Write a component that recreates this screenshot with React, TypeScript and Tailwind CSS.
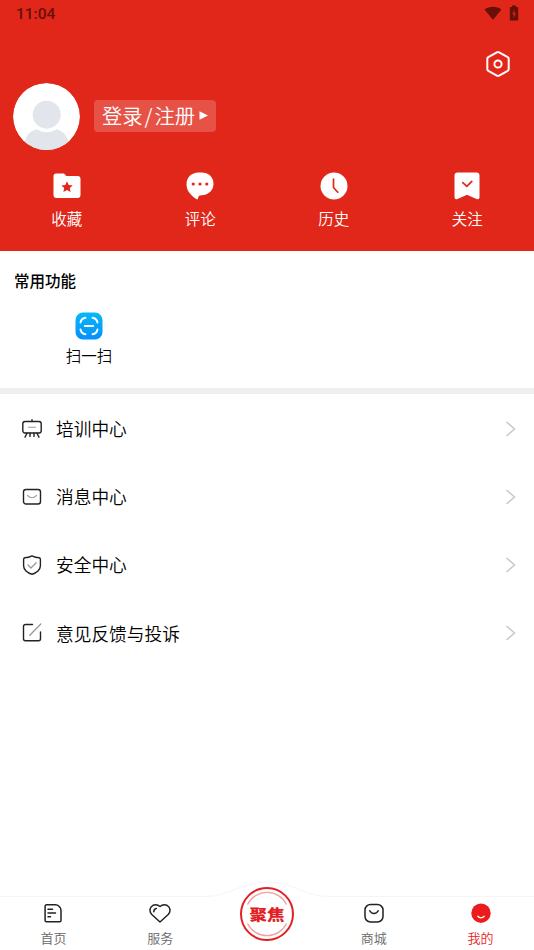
import type { ReactNode } from 'react'

const shortcuts: { label: string; icon: ReactNode }[] = [
  {
    label: '收藏',
    icon: (
      <svg className="w-[28px] h-[28px]" viewBox="0 0 28 28">
        <path d="M3 1.500h7.200c.9 0 1.400.4 1.900 1.100L13.200 4H24.500a3 3 0 0 1 3 3v16a3 3 0 0 1-3 3H3.500a3 3 0 0 1-3-3V4A2.500 2.500 0 0 1 3 1.500z" fill="#fff" />
        <path d="M14 9.300l1.700 3.600 4 .5-2.900 2.700.8 4-3.600-2-3.600 2 .8-4-2.900-2.700 4-.5z" fill="#e12719" />
      </svg>
    ),
  },
  {
    label: '评论',
    icon: (
      <svg className="w-[28px] h-[28px]" viewBox="0 0 28 28">
        <path d="M12.500.500h3C22.500.500 27.500 5 27.500 11.700c0 6.500-4.500 11-12 11.500-2 .2-2.900.8-3.200 1.900l-.4 1.600c-.2.8-1 .9-1.600.4C4 22.500.500 18.500.500 12 .500 5.500 5.500.500 12.500.500z" fill="#fff" />
        <circle cx="7.200" cy="12" r="1.600" fill="#e12719" />
        <circle cx="14" cy="12" r="1.600" fill="#e12719" />
        <circle cx="20.800" cy="12" r="1.600" fill="#e12719" />
      </svg>
    ),
  },
  {
    label: '历史',
    icon: (
      <svg className="w-[28px] h-[28px]" viewBox="0 0 28 28">
        <circle cx="14" cy="14" r="13.500" fill="#fff" />
        <path d="M13.500 7v8.500l4.300 4.700" fill="none" stroke="#e12719" strokeWidth="1.700" strokeLinecap="round" strokeLinejoin="round" />
      </svg>
    ),
  },
  {
    label: '关注',
    icon: (
      <svg className="w-[28px] h-[28px]" viewBox="0 0 28 28">
        <path d="M4.500.500h19a3 3 0 0 1 3 3v21.800c0 1.700-1.500 2.300-2.900 1.600L15 23.200c-.7-.3-1.300-.3-2 0l-8.600 3.700c-1.400.7-2.900.1-2.900-1.600V3.500a3 3 0 0 1 3-3z" fill="#fff" />
        <path d="M9.800 10.600l4 3.700 5-5" fill="none" stroke="#e12719" strokeWidth="1.700" strokeLinecap="round" strokeLinejoin="round" />
      </svg>
    ),
  },
]

const menu: { label: string; icon: ReactNode }[] = [
  {
    label: '培训中心',
    icon: (
      <>
        <rect x="0.800" y="2.500" width="18.400" height="11.500" rx="2.200" />
        <path d="M10 .700v1.800M5 14.200l-2 4M15 14.200l2 4M8 14.200v3.200M12 14.200v3.200" />
        <path d="M6.500 8.300h7" stroke="#999" strokeWidth="1.100" />
      </>
    ),
  },
  {
    label: '消息中心',
    icon: (
      <>
        <rect x="1.500" y="2.500" width="17" height="14.500" rx="2.500" />
        <path d="M5.500 8.500c2 1.700 3.200 2.300 4.500 2.300s2.500-.6 4.500-2.300" stroke="#999" strokeWidth="1.100" />
      </>
    ),
  },
  {
    label: '安全中心',
    icon: (
      <>
        <path d="M10 .900c2.700 1.400 5 1.800 7.200 1.900.8.200 1.200.8 1.200 1.600v6.300c0 4-3.700 7.500-8.400 8.500-4.700-1-8.400-4.500-8.400-8.500V4.400c0-.8.4-1.400 1.200-1.600C5 2.700 7.300 2.300 10 .900z" />
        <path d="M6 10l3 3 5.200-5.300" stroke="#999" strokeWidth="1.300" />
      </>
    ),
  },
  {
    label: '意见反馈与投诉',
    icon: (
      <>
        <path d="M10.500 1.500H3.500a2 2 0 0 0-2 2v12.300a2 2 0 0 0 2 2h13a2 2 0 0 0 2-2V9" />
        <path d="M7.800 12.300L18.800 1" stroke="#999" strokeWidth="1.300" />
      </>
    ),
  },
]

function TabItem({ label, active, children }: { label: string; active?: boolean; children: ReactNode }) {
  return (
    <div className={`flex w-1/5 flex-col items-center pt-[7px] ${active ? 'text-[#e92321]' : 'text-[#666]'}`}>
      <svg className="h-5 w-[22px]" viewBox="-1 0 22 20" fill="none" stroke="#222" strokeWidth="1.500" strokeLinecap="round" strokeLinejoin="round">
        {children}
      </svg>
      <span className="mt-[6px] text-[13px] leading-[18px]">{label}</span>
    </div>
  )
}

export default function App() {
  return (
    <div className="flex h-[950px] w-[534px] flex-col overflow-hidden bg-white font-['Noto_Sans_CJK_SC',sans-serif] font-[350] text-black">
      <header className="flex h-[251px] shrink-0 flex-col bg-[#e12719] text-white">
        <div className="flex h-7 items-center justify-between pl-4 pr-[15px]">
          <span className="pt-px font-[Roboto,sans-serif] text-[15.5px] font-medium text-[#680f09]">11:04</span>
          <div className="flex items-center gap-[7px] pb-[2px]">
            <svg className="h-[14px] w-[18px]" viewBox="0 0 18 14">
              <path d="M.500 3.500C5.500-.300 12.500-.300 17.500 3.500L9 13.800z" fill="#680f09" />
            </svg>
            <svg className="h-[16px] w-[10px]" viewBox="0 0 10 16">
              <path d="M3 .500h4V2h1.500c.4 0 .7.300.7.700v12c0 .4-.3.700-.7.700h-7c-.4 0-.7-.3-.7-.7v-12c0-.4.3-.7.700-.7H3z" fill="#680f09" />
              <path d="M5.600 4.500L3 9.300h1.600V13L7.200 8.200H5.600z" fill="#c92217" />
            </svg>
          </div>
        </div>

        <div className="flex h-[55px] justify-end pr-[22.500px] pt-[22px]">
          <svg className="h-7 w-7" viewBox="0 0 28 28" fill="none" stroke="#fff" strokeWidth="2">
            <path d="M12.900 2.300a2.200 2.200 0 0 1 2.200 0l8.600 4.900a2 2 0 0 1 1 1.800v10a2 2 0 0 1-1 1.800l-8.600 4.900a2.200 2.200 0 0 1-2.200 0l-8.600-4.900a2 2 0 0 1-1-1.800V9a2 2 0 0 1 1-1.800z" />
            <circle cx="14" cy="14" r="3.600" />
          </svg>
        </div>

        <div className="flex h-[67px] items-center pl-[13px]">
          <svg className="h-[67px] w-[67px] rounded-full" viewBox="0 0 67 67">
            <circle cx="33.500" cy="33.500" r="33.500" fill="#fff" />
            <circle cx="33.700" cy="31.700" r="14" fill="#e2e5ec" />
            <path d="M8 67L14.500 52c2.500-3.200 6-5.300 9.500-5.800 2 1.300 5.500 3 9.700 3s7.700-1.700 9.700-3c4 .7 7.500 3.500 9.500 6.500L60 67z" fill="#e2e5ec" />
          </svg>
          <div className="mb-[2px] ml-[13.500px] flex h-8 w-[122.500px] items-center rounded-[4px] bg-[#e75247] pl-[8.500px] text-[20.3px] leading-8">
            <span className="-mt-px">登录</span>
            <span className="-mt-px mx-[2px]">/</span>
            <span className="-mt-px">注册</span>
            <svg className="ml-[3.500px] h-[9px] w-[9px]" viewBox="0 0 9 9">
              <path d="M.500.200L9 4.500.500 8.800z" fill="#fff" />
            </svg>
          </div>
        </div>

        <nav className="flex pt-[21.500px]">
          {shortcuts.map((item) => (
            <div key={item.label} className="flex w-1/4 flex-col items-center">
              {item.icon}
              <span className="mt-[6.500px] text-[15.5px] leading-6">{item.label}</span>
            </div>
          ))}
        </nav>
      </header>

      <section className="h-[137px] shrink-0 pt-[17px]">
        <h2 className="pl-[14px] text-[15.5px] font-medium leading-6">常用功能</h2>
        <div className="flex w-[178px] flex-col items-center pt-[20px]">
          <svg className="h-[28px] w-[28px]" viewBox="0 0 28 28">
            <defs>
              <linearGradient id="scan" x1="0" y1="0" x2="0" y2="1">
                <stop offset="0" stopColor="#08b8f8" />
                <stop offset="1" stopColor="#0490fc" />
              </linearGradient>
            </defs>
            <rect x="0.500" y="0.500" width="27" height="27" rx="7.500" fill="url(#scan)" />
            <path
              d="M5.500 10.500c.5-2.700 2-4.300 5-4.700M17.500 5.800c3 .4 4.500 2 5 4.700M22.500 17.500c-.5 2.700-2 4.300-5 4.700M10.500 22.200c-3-.4-4.500-2-5-4.700M9.800 14h8.400"
              fill="none"
              stroke="#fff"
              strokeWidth="1.900"
              strokeLinecap="round"
            />
          </svg>
          <span className="mt-[3px] text-[15.5px] leading-6">扫一扫</span>
        </div>
      </section>

      <div className="h-[6px] shrink-0 bg-[#efefef]" />

      <ul className="flex-1">
        {menu.map((item) => (
          <li key={item.label} className="flex h-[68.2px] items-center pl-[22px] pr-[18px]">
            <svg className="mt-px h-5 w-5" viewBox="0 0 20 20" fill="none" stroke="#222" strokeWidth="1.400" strokeLinecap="round" strokeLinejoin="round">
              {item.icon}
            </svg>
            <span className="ml-[14px] flex-1 text-[17.7px] leading-7">{item.label}</span>
            <svg className="mt-px h-4 w-[10px]" viewBox="0 0 10 16" fill="none" stroke="#c9c9c9" strokeWidth="1.500">
              <path d="M.500 1l8 7-8 7" />
            </svg>
          </li>
        ))}
      </ul>

      <footer className="relative flex h-[54px] shrink-0">
        {/* top edge of the bar, raised around the centre button */}
        <svg className="absolute left-0 -top-[16px] h-[18px] w-full" viewBox="0 0 534 18" fill="none" stroke="#f5f5f5">
          <path d="M0 16.500h205c25 0 35-14.500 62-14.500s37 14.500 62 14.500h205" />
        </svg>
        <TabItem label="首页">
          <path d="M3.500 1.800h8.800c3 0 5.700 2.600 5.700 5.600v10c0 .9-.5 1.400-1.400 1.400H3.500c-.9 0-1.400-.5-1.400-1.400V3.200c0-.9.500-1.400 1.400-1.400z" />
          <path d="M5 6.200h4.500M5 10h7.500M5 13.800h2.500" />
        </TabItem>
        <TabItem label="服务">
          <path d="M10 19L1.800 11.500C-1 8.500-.500 4 3 2.300 5.500 1.200 8.200 1.800 10 3.500c1.800-1.700 4.500-2.300 7-1.200C20.500 4 21 8.500 18.200 11.500z" />
          <path d="M3.800 8.800c0-1.900.9-2.900 2.500-3.200" />
        </TabItem>
        <div className="flex w-1/5 justify-center">
          <div className="relative -mt-[9px] flex h-[54px] w-[54px] items-center justify-center rounded-full border-2 border-[#e12024] bg-white">
            <svg className="absolute inset-0 h-[50px] w-[50px]" viewBox="0 0 50 50" fill="none" stroke="#f3a0a0" strokeWidth="1.300">
              <path d="M5.500 15.500a21.700 21.700 0 0 1 39 0M5.500 34.500a21.700 21.700 0 0 0 39 0" />
            </svg>
            <span className="relative scale-x-[1.03] scale-y-[.87] whitespace-nowrap text-[17px] font-black leading-5 text-[#e12024]">聚焦</span>
          </div>
        </div>
        <TabItem label="商城">
          <rect x="1" y="1.500" width="18" height="17.500" rx="5.500" />
          <path d="M5.800 7.700c.8 1.700 2.400 2.700 4.200 2.700s3.400-1 4.200-2.700" />
        </TabItem>
        <TabItem label="我的" active>
          <circle cx="10" cy="10.200" r="9.700" fill="#ed1c1c" stroke="none" />
          <path d="M6.800 13.300c1.800 2 4.600 2 6.400 0" stroke="#fff" strokeWidth="1.300" />
        </TabItem>
      </footer>
    </div>
  )
}
